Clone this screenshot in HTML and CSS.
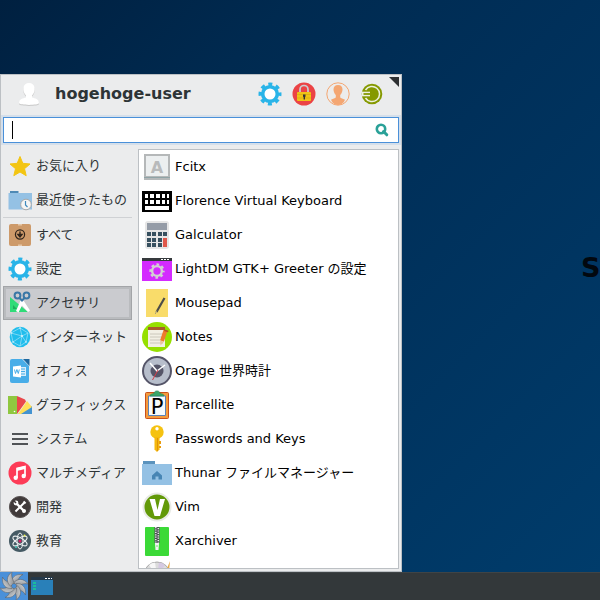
FILE: index.html
```html
<!DOCTYPE html>
<html lang="ja">
<head>
    <meta charset="UTF-8">
    <title>Whisker Menu</title>
    <link rel="stylesheet" href="styles.css">
</head>
<body>
    <svg class="defs" aria-hidden="true">
        <symbol id="gear" viewBox="0 0 24 24">
            <g fill="none" stroke="currentColor">
                <circle cx="12" cy="12" r="7.300" stroke-width="3.600"/>
                <circle cx="12" cy="12" r="9.800" stroke-width="3.400" stroke-dasharray="4 3.697" stroke-dashoffset="2"/>
            </g>
        </symbol>
        <symbol id="blade" viewBox="0 0 28 28">
            <path d="M11.500 12C11 6 15 1.500 23 2.500c-3.500 1.500-4.500 4.500-6.500 9z"/>
        </symbol>
    </svg>

    <main class="desktop">
        <div class="wallpaper-logo">S</div>

        <section class="menu">
            <header class="menu-header">
                <svg class="avatar" viewBox="0 0 24 24">
                    <path d="M2 21c0-4 4-4.600 7-5.500v-2C6.500 11 6 8 6.500 5.500 7 2.500 9 1 12 1s5 1.500 5.500 4.500c.5 2.500 0 5.500-2.500 8v2c3 .9 7 1.500 7 5.500 0 2.500-20 2.500-20 0z" fill="#c8c8c8" transform="translate(0 1)"/>
                    <path d="M2 21c0-4 4-4.600 7-5.500v-2C6.500 11 6 8 6.500 5.500 7 2.500 9 1 12 1s5 1.500 5.500 4.500c.5 2.500 0 5.500-2.500 8v2c3 .9 7 1.500 7 5.500 0 2.500-20 2.500-20 0z" fill="#fff"/>
                </svg>
                <h1 class="user-name">hogehoge-user</h1>
                <div class="commands">
                    <button class="command" aria-label="設定マネージャー">
                        <svg class="icon gear-blue" viewBox="0 0 24 24"><circle cx="12" cy="12" r="7" fill="#fff"/><use href="#gear"/></svg>
                    </button>
                    <button class="command" aria-label="画面をロック">
                        <svg class="icon" viewBox="0 0 24 24">
                            <circle cx="12" cy="12" r="11.500" fill="#eb4345"/>
                            <path d="M8 11V7.500a4 4 0 0 1 8 0V11" fill="none" stroke="#c9cdd0" stroke-width="1.700"/>
                            <rect x="5" y="10" width="14" height="9" rx="1" fill="#efc416"/>
                            <path d="M5 12.500h14M5 16h14" stroke="#d9ac0c" stroke-width=".7"/>
                            <path d="M11 12.500h2.500v2l-.5.700v2.300h-1.400v-2.300l-.6-.7z" fill="#333"/>
                        </svg>
                    </button>
                    <button class="command" aria-label="ユーザーの切り替え">
                        <svg class="icon" viewBox="0 0 24 24">
                            <circle cx="12" cy="12" r="11.200" fill="#ececec" stroke="#f4a672"/>
                            <path d="M12 3c3 0 4.500 2 4.500 4.600 0 2-1 4.400-2.300 5.400v2.500c1.500 1.200 3.600 1.200 4.800 2.300C17.500 21.500 15 23 12 23s-5.500-1.500-7-5.200c1.200-1.100 3.300-1.100 4.800-2.300V13C8.500 12 7.500 9.600 7.500 7.600 7.500 5 9 3 12 3z" fill="#f4a672"/>
                        </svg>
                    </button>
                    <button class="command" aria-label="ログアウト">
                        <svg class="icon" viewBox="0 0 24 24">
                            <circle cx="12" cy="12" r="10.300" fill="#859900"/>
                            <path d="M5.500 8a7.600 7.600 0 1 1 0 8" fill="none" stroke="#edf0df" stroke-width="1.500"/>
                            <path d="M2 12h9" stroke="#edf0df" stroke-width="4.600"/>
                            <path d="M3.500 12H12" stroke="#859900" stroke-width="1.800"/>
                            <path d="M10 8l5.500 4-5.500 4z" fill="#859900"/>
                        </svg>
                    </button>
                </div>
                <svg class="resizer" viewBox="0 0 10 10"><path d="M0 0h10v10z" fill="#2e3032"/></svg>
            </header>

            <div class="search-band">
                <label class="search">
                    <span class="caret"></span>
                    <input class="search-input" type="text" aria-label="検索">
                    <svg class="search-icon" viewBox="0 0 14 14">
                        <circle cx="6" cy="6" r="4.200" fill="none" stroke="#2aa198" stroke-width="2.600"/>
                        <path d="M8.500 8.500l3.300 3.300" stroke="#2aa198" stroke-width="3" stroke-linecap="round"/>
                    </svg>
                </label>
            </div>

            <div class="menu-body">
                <nav class="categories">
                    <button class="category">
                        <svg class="icon" viewBox="0 0 24 24"><path d="M12 2.500l2.800 6.800 7.200.7-5.500 4.700 1.700 7L12 18l-6.200 3.700 1.700-7L2 10l7.200-.7z" fill="#f3c512" stroke="#f3c512" stroke-linejoin="round"/></svg>
                        お気に入り
                    </button>
                    <button class="category">
                        <svg class="icon" viewBox="0 0 24 24">
                            <path d="M2 3h8.500v4H2z" fill="#4f8ab5"/>
                            <path d="M.5 5H24v16.500H.5z" fill="#94c1e4"/>
                            <circle cx="18" cy="16.500" r="5.300" fill="#f5f5f5" stroke="#a9a9a9"/>
                            <path d="M17.500 13v4l2 2" fill="none" stroke="#3e89bd" stroke-width="1.200"/>
                        </svg>
                        最近使ったもの
                    </button>
                    <hr class="divider">
                    <button class="category">
                        <svg class="icon" viewBox="0 0 24 24">
                            <rect x="1" y="1" width="22" height="22" rx="2" fill="#cd9a6a"/>
                            <path d="M10 1h4v1.500h-4zM10 21.500h4V23h-4z" fill="#e6c6a5"/>
                            <circle cx="12" cy="11.500" r="4.600" fill="none" stroke="#30251c" stroke-width="1.200"/>
                            <path d="M12 8.500v3M10 11.500l2 2.500 2-2.500z" fill="#30251c" stroke="#30251c" stroke-width="1.400"/>
                        </svg>
                        すべて
                    </button>
                    <button class="category">
                        <svg class="icon gear-blue" viewBox="0 0 24 24"><circle cx="12" cy="12" r="7" fill="#fff"/><use href="#gear"/></svg>
                        設定
                    </button>
                    <button class="category selected">
                        <svg class="icon" viewBox="0 0 24 24">
                            <path d="M2 6l18 15H2z" fill="#2fdc78"/>
                            <path d="M5 14l4 4H5z" fill="#20ad5d"/>
                            <path d="M12.500 9.500h3l6.500 10-2 1.500-6-6.500-3.500 7-2.500-1.500z" fill="#fff"/>
                            <g fill="none" stroke="#3977a6" stroke-width="2"><circle cx="9.500" cy="4.500" r="2.900"/><circle cx="18.500" cy="4.500" r="2.900"/><path d="M11.500 7l2.500 2.500L16.500 7"/></g>
                        </svg>
                        アクセサリ
                    </button>
                    <button class="category">
                        <svg class="icon" viewBox="0 0 24 24">
                            <circle cx="12" cy="12" r="10.300" fill="#20bdec"/>
                            <path d="M3 8l9-5 8 5-2 9-6 4-7-4zM3 8l11 3 6-3M5 17l9-6 4 6M12 3l2 8-2 10" fill="none" stroke="#b8eafa" stroke-width=".6"/>
                            <g fill="#d9f4fc"><circle cx="3.500" cy="8" r=".8"/><circle cx="14" cy="11" r="1"/><circle cx="5" cy="17" r=".8"/><circle cx="12" cy="3" r=".8"/><circle cx="18" cy="17" r=".8"/></g>
                        </svg>
                        インターネット
                    </button>
                    <button class="category">
                        <svg class="icon" viewBox="0 0 24 24">
                            <path d="M4 0h10l7 7v15a2 2 0 0 1-2 2H4a2 2 0 0 1-2-2V2a2 2 0 0 1 2-2z" fill="#48ade8"/>
                            <path d="M15 0h6.500v7z" fill="#1d68a0"/>
                            <path d="M12 8h6v9h-6z" fill="#d8edfa"/>
                            <path d="M13 10h4M13 12.500h4M13 15h4" stroke="#48ade8"/>
                            <path d="M5 7.500l8-1v12l-8-1z" fill="#fff"/>
                            <path d="M6.500 10.500l1 4 1.400-4 1.400 4 1-4" fill="none" stroke="#48ade8"/>
                        </svg>
                        オフィス
                    </button>
                    <button class="category">
                        <svg class="icon" viewBox="0 0 24 24">
                            <path d="M10 21L24 13v8z" fill="#4393d1"/>
                            <path d="M10 21L19 8l5 6-11 7z" fill="#ffde59"/>
                            <path d="M9 21V3l8 3.500 1 2z" fill="#e9474b"/>
                            <path d="M0 3h9v18H0z" fill="#8fc740"/>
                            <circle cx="6.500" cy="18.500" r=".8" fill="#fff"/>
                        </svg>
                        グラフィックス
                    </button>
                    <button class="category">
                        <svg class="icon" viewBox="0 0 24 24"><path d="M4 7h16M4 12h16M4 17h16" stroke="#505356" stroke-width="2"/></svg>
                        システム
                    </button>
                    <button class="category">
                        <svg class="icon" viewBox="0 0 24 24">
                            <circle cx="12" cy="12" r="11.500" fill="#fd3c57"/>
                            <path d="M9 17V7.500l8-2V15" fill="none" stroke="#fff" stroke-width="1.700"/>
                            <path d="M9 7l8-2v3L9 10z" fill="#fff"/>
                            <circle cx="7.700" cy="16.800" r="2.200" fill="#fff"/><circle cx="15.700" cy="15" r="2.200" fill="#fff"/>
                        </svg>
                        マルチメディア
                    </button>
                    <button class="category">
                        <svg class="icon" viewBox="0 0 24 24">
                            <circle cx="12" cy="12" r="10.600" fill="#403a3a" stroke="#5c5757" stroke-width="1"/>
                            <path d="M8 8l8.500 8.500" stroke="#fff" stroke-width="2.400"/>
                            <path d="M16 8l-8.500 8.500" stroke="#fff" stroke-width="2"/>
                            <circle cx="8" cy="8" r="2.400" fill="#fff"/><path d="M5 5l3 3" stroke="#403a3a" stroke-width="1.600"/>
                            <circle cx="16" cy="16" r="2" fill="#fff"/><path d="M15.500 6.500l2 2" stroke="#fff" stroke-width="2.200"/>
                        </svg>
                        開発
                    </button>
                    <button class="category">
                        <svg class="icon" viewBox="0 0 24 24">
                            <circle cx="12" cy="12" r="11" fill="#455a64"/>
                            <g fill="none" stroke="#eceff1" stroke-width="1">
                                <ellipse cx="12" cy="12" rx="3" ry="8"/>
                                <ellipse cx="12" cy="12" rx="3" ry="8" transform="rotate(60 12 12)"/>
                                <ellipse cx="12" cy="12" rx="3" ry="8" transform="rotate(120 12 12)"/>
                            </g>
                            <circle cx="12" cy="12" r="1.500" fill="#d81b60"/>
                            <circle cx="16.500" cy="6.500" r="1" fill="#e6ee4f"/><circle cx="8" cy="18" r="1" fill="#4dd0c0"/>
                        </svg>
                        教育
                    </button>
                </nav>

                <ul class="apps">
                    <li><a class="app" href="#">
                        <svg class="app-icon" viewBox="0 0 30 30">
                            <path d="M2 2h26v26H2z" fill="#b5b8b9"/><path d="M4 4h22v20H4z" fill="#eceff0"/><path d="M2 25h26v1H2z" fill="#8fa3a6"/>
                            <text class="glyph-fcitx" x="15" y="21" text-anchor="middle">A</text>
                        </svg>
                        Fcitx
                    </a></li>
                    <li><a class="app" href="#">
                        <svg class="app-icon" viewBox="0 0 30 30">
                            <path d="M0 5h30v21H0z" fill="#000"/>
                            <path d="M3 8h3v4H3zM8 8h4v4H8zM14 8h4v4h-4zM20 8h3v4h-3zM25 8h2v4h-2zM3 14h3v4H3zM8 14h4v4H8zM14 14h4v4h-4zM20 14h3v4h-3zM25 14h2v4h-2zM3 20h24v4H3z" fill="#fff"/>
                        </svg>
                        Florence Virtual Keyboard
                    </a></li>
                    <li><a class="app" href="#">
                        <svg class="app-icon" viewBox="0 0 30 30">
                            <rect x="3" y="1" width="24" height="28" rx="3" fill="#e6e6e6"/>
                            <path d="M5 3h20v7H5z" fill="#959ca7"/>
                            <path d="M5 12h4v4H5zM10 12h4v4h-4zM16 12h4v4h-4zM21 12h4v4h-4zM5 18h4v4H5zM10 18h4v4h-4zM16 18h4v4h-4zM5 23h4v4H5zM10 23h4v4h-4zM16 23h4v4h-4z" fill="#37505f"/>
                            <path d="M21 18h4v9h-4z" fill="#e0584b"/>
                        </svg>
                        Galculator
                    </a></li>
                    <li><a class="app" href="#">
                        <svg class="app-icon gear-grey" viewBox="0 0 30 30">
                            <path d="M0 4h30v23H0z" fill="#d42bff"/><path d="M0 4h30v3H0z" fill="#363a3d"/>
                            <path d="M19 5h2v1h-2zM22 5h2v1h-2zM25 5h2v1h-2z" fill="#fff"/>
                            <use href="#gear" x="7" y="9" width="16" height="16"/>
                        </svg>
                        LightDM GTK+ Greeter の設定
                    </a></li>
                    <li><a class="app" href="#">
                        <svg class="app-icon" viewBox="0 0 30 30">
                            <path d="M4 1h22v28H4z" fill="#f9dc6a"/>
                            <path d="M22.500 10l-8 14" stroke="#4d4d48" stroke-width="2.200"/><path d="M14.800 22.500l-1.500 3.500" stroke="#aaa177"/>
                        </svg>
                        Mousepad
                    </a></li>
                    <li><a class="app" href="#">
                        <svg class="app-icon" viewBox="0 0 30 30">
                            <circle cx="15" cy="15" r="15" fill="#96e000"/>
                            <path d="M6 5h17v20H6z" fill="#f2efe4"/><path d="M6 5h17v3H6z" fill="#a85c2c"/>
                            <path d="M8 12h13M8 15h13M8 18h13M8 21h13" stroke="#c2beb0" stroke-width=".8"/>
                            <path d="M23.500 8.500L20 19" stroke="#ee7b2c" stroke-width="4"/>
                            <path d="M18 18.500l4 1.300-3.500 3.700z" fill="#e9c59b"/>
                            <path d="M22.300 8.200l4 1.300" stroke="#b34d23" stroke-width="1.500"/>
                        </svg>
                        Notes
                    </a></li>
                    <li><a class="app" href="#">
                        <svg class="app-icon" viewBox="0 0 30 30">
                            <circle cx="15" cy="15" r="14" fill="#b7becb" stroke="#555568" stroke-width="2"/>
                            <circle cx="15" cy="15" r="6.500" fill="#555568"/>
                            <path d="M8 7l7 8 8-6" fill="none" stroke="#fff" stroke-width="1.500"/>
                            <path d="M16 14l-5.500 10" stroke="#d33a45"/>
                        </svg>
                        Orage 世界時計
                    </a></li>
                    <li><a class="app" href="#">
                        <svg class="app-icon" viewBox="0 0 30 30">
                            <rect x="3.500" y="2.500" width="23" height="26" rx="1" fill="#f59a3c" stroke="#c8501b"/>
                            <path d="M6.500 6h17v19.500h-17z" fill="#f8fafc" stroke="#5a82b8"/>
                            <path d="M8 6c0-2 2-2 4-2.500C12 0 18 0 18 3.500c2 .5 4 .5 4 2.500z" fill="#3aa569" stroke="#268750" stroke-width=".6"/>
                            <text class="glyph-parcel" x="15" y="24" text-anchor="middle">P</text>
                        </svg>
                        Parcellite
                    </a></li>
                    <li><a class="app" href="#">
                        <svg class="app-icon" viewBox="0 0 30 30">
                            <circle cx="15" cy="8" r="6.700" fill="#f5c211"/><circle cx="15" cy="4.800" r="1.700" fill="#fff"/>
                            <path d="M12.500 13h5v12.500L15 28l-2.500-2.500z" fill="#f5b80d"/><path d="M15.500 14v13" stroke="#dd940b"/>
                            <path d="M17 17h2v3h-2zM17 22h2v2h-2z" fill="#e99b0c"/>
                        </svg>
                        Passwords and Keys
                    </a></li>
                    <li><a class="app" href="#">
                        <svg class="app-icon" viewBox="0 0 30 30">
                            <path d="M1 3h12v5H1z" fill="#5b93bd"/><path d="M0 6h30v21H0z" fill="#94c1e4"/>
                            <path d="M10 17.500l5-4.500 5 4.500v4h-3.500v-3h-3v3H10z" fill="#4785b4"/>
                        </svg>
                        Thunar ファイルマネージャー
                    </a></li>
                    <li><a class="app" href="#">
                        <svg class="app-icon" viewBox="0 0 30 30">
                            <circle cx="15" cy="15" r="13.500" fill="#629908" stroke="#e8eae5" stroke-width="2"/>
                            <path d="M7.500 7h5.500l2.500 11L18 7h5l-5 17h-5.500z" fill="#fff"/>
                        </svg>
                        Vim
                    </a></li>
                    <li><a class="app" href="#">
                        <svg class="app-icon" viewBox="0 0 30 30">
                            <rect x="3" y="1" width="24" height="29" rx="1" fill="#3bd937"/>
                            <path d="M12.500 1h5v16h-5z" fill="#4c5054"/>
                            <path d="M13.800 1v16M16.300 2v15" stroke="#e8e8e8" stroke-width="1.500" stroke-dasharray="1.200 1.200"/>
                            <path d="M13 17h4l-.5 7h-3z" fill="#f3f3f3"/><circle cx="15" cy="20" r=".7" fill="#3bd937"/>
                        </svg>
                        Xarchiver
                    </a></li>
                    <li><a class="app" href="#" aria-label="Xfburn">
                        <svg class="app-icon" viewBox="0 0 30 30">
                            <circle cx="15" cy="15" r="13" fill="#dcdcdc" stroke="#a8a8a8"/>
                            <path d="M15 16L7 5a13 13 0 0 1 6-2.500z" fill="#f7f7f7"/><path d="M15 16l2-13.500a13 13 0 0 1 6 2.500z" fill="#d5c9e2"/>
                            <path d="M24 11l4-10-1 10z" fill="#e7a947"/>
                        </svg>
                    </a></li>
                </ul>
            </div>
        </section>
    </main>

    <footer class="taskbar">
        <button class="start" aria-label="アプリケーションメニュー">
            <svg class="start-icon" viewBox="0 0 28 28">
                <defs>
                    <linearGradient id="steel" x1="0" y1="0" x2="1" y2="1">
                        <stop offset="0" stop-color="#e0e2e4"/>
                        <stop offset="1" stop-color="#6a6f75"/>
                    </linearGradient>
                </defs>
                <g fill="url(#steel)" stroke="#585e65" stroke-width=".5">
                    <use href="#blade"/>
                    <use href="#blade" transform="rotate(45 14 14)"/>
                    <use href="#blade" transform="rotate(90 14 14)"/>
                    <use href="#blade" transform="rotate(135 14 14)"/>
                    <use href="#blade" transform="rotate(180 14 14)"/>
                    <use href="#blade" transform="rotate(225 14 14)"/>
                    <use href="#blade" transform="rotate(270 14 14)"/>
                    <use href="#blade" transform="rotate(315 14 14)"/>
                </g>
                <circle cx="14" cy="14" r="2" fill="#4a90d9"/>
            </svg>
        </button>
        <button class="task" aria-label="デスクトップを表示">
            <svg class="icon" viewBox="0 0 24 24">
                <path d="M1 3h22v3H1z" fill="#23384a"/><path d="M1 6h22v15H1z" fill="#2980b9"/>
                <path d="M15 4h2v1h-2zM18 4h2v1h-2zM21 4h1v1h-1z" fill="#fff"/>
                <path d="M3 8h3v2H3zM3 11h3v2H3zM3 14h3v2H3z" fill="#1abc9c"/>
            </svg>
        </button>
    </footer>
</body>
</html>
```

FILE: styles.css
```css
*{
    margin: 0;
    padding: 0;
    box-sizing: border-box;
}
body{
    display: flex;
    flex-direction: column;
    min-height: 100vh;
    font-family: "DejaVu Sans", "Noto Sans CJK JP", sans-serif;
    font-size: 13px;
    line-height: 20px;
    color: #2e3436;
}
ul{
    list-style: none;
}
button{
    border: none;
    background: none;
    font: inherit;
    color: inherit;
}
.defs{
    position: absolute;
    width: 0;
    height: 0;
}
.icon{
    width: 24px;
    height: 24px;
    flex: none;
}

/* デスクトップ */
.desktop{
    flex: 1;
    position: relative;
    display: flex;
    align-items: flex-end;
    overflow: hidden;
    background: linear-gradient(135deg, #002040 0%, #002a50 25%, #00305a 50%, #003c6b 100%);
}
.wallpaper-logo{
    position: absolute;
    left: 581px;
    top: 252px;
    font-size: 27px;
    font-weight: bold;
    line-height: 32px;
    color: #02080f;
}

/* メニュー */
.menu{
    width: 402px;
    max-width: 100%;
    border: 1px solid #bcc0c4;
    background: #ebeced;
}
.menu-header{
    position: relative;
    display: flex;
    align-items: center;
    height: 40px;
    padding: 0 17px 2px 16px;
}
.avatar{
    width: 24px;
    height: 24px;
}
.user-name{
    flex: 1;
    margin-left: 14px;
    font-size: 16px;
    line-height: 20px;
}
.commands{
    display: flex;
    gap: 10px;
}
.command{
    display: flex;
}
.gear-blue{
    color: #29b4e8;
}
.gear-grey{
    color: #d2d2d2;
}
.resizer{
    position: absolute;
    right: 2px;
    top: 2px;
    width: 10px;
    height: 10px;
}
.search-band{
    padding: 2px;
    background: #d5dfea;
}
.search{
    display: flex;
    align-items: center;
    height: 26px;
    padding: 0 9px 0 8px;
    border: 1px solid #4a90d9;
    background: #fff;
}
.caret{
    width: 1px;
    height: 18px;
    background: #000;
}
.search-input{
    flex: 1;
    min-width: 0;
    border: none;
    outline: none;
    background: none;
    font: inherit;
    caret-color: transparent;
}
.search-icon{
    width: 14px;
    height: 14px;
}
.menu-body{
    display: grid;
    grid-template-columns: 129px 1fr;
    gap: 6px;
    padding: 4px 2px 2px 2px;
}

/* カテゴリ */
.categories{
    padding-bottom: 11px;
}
.category{
    display: flex;
    align-items: center;
    gap: 4px;
    width: 100%;
    height: 34px;
    padding: 0 3px;
    border: 2px solid transparent;
    white-space: nowrap;
}
.category.selected{
    border: 1px solid #a3a5a8;
    padding: 0 4px;
    background: #cacbcf;
    box-shadow: inset 0 0 0 2px #b9bbbe;
}
.divider{
    height: 1px;
    border: none;
    background: #cfd1d4;
}

/* アプリ一覧 */
.apps{
    height: 0;
    min-height: 100%;
    overflow-y: auto;
    scrollbar-width: none;
    border: 1px solid #bcc0c4;
    background: #fff;
}
.app{
    display: flex;
    align-items: center;
    gap: 3px;
    height: 34px;
    padding-left: 3px;
    color: #000;
    text-decoration: none;
    white-space: nowrap;
}
.app-icon{
    width: 30px;
    height: 30px;
    flex: none;
}
.glyph-fcitx{
    font-size: 16px;
    font-weight: bold;
    fill: #b8babb;
}
.glyph-parcel{
    font-size: 21px;
    fill: #000;
}

/* タスクバー */
.taskbar{
    display: flex;
    height: 28px;
    background: #33383a;
    box-shadow: inset 0 1px #3f4446;
}
.start{
    width: 28px;
    background: #4a90d9;
}
.start-icon{
    display: block;
    width: 28px;
    height: 28px;
}
.task{
    display: flex;
    align-items: center;
    padding: 0 2px;
}
```
